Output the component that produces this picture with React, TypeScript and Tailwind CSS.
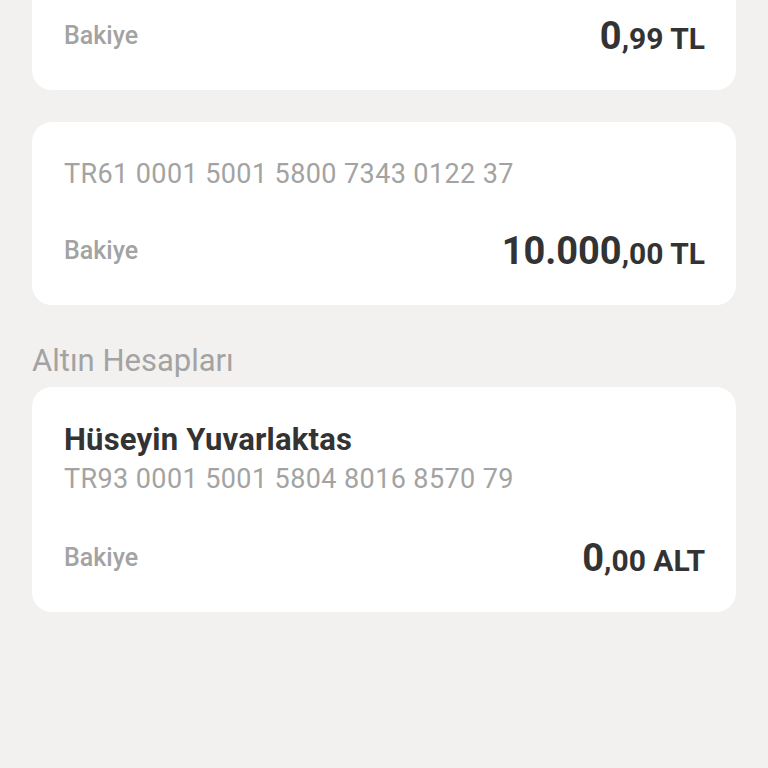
import React from "react";

function AmountRow({ big, small, unit, rowMt }: { big: string; small: string; unit: string; rowMt: string }) {
  return (
    <div className={`flex items-center justify-between ${rowMt}`}>
      <span className="text-[25px] leading-[30px] font-medium text-[#a3a3a3]">Bakiye</span>
      <span className="text-[38px] leading-[44px] font-bold text-[#333333]">
        {big}
        <span className="text-[30px] leading-none">
          ,{small} {unit}
        </span>
      </span>
    </div>
  );
}

export default function App() {
  return (
    <div
      className="min-h-screen w-full bg-[#f2f1ef] px-8"
      style={{ fontFamily: "Roboto, 'Noto Sans', Arial, sans-serif" }}
    >
      {/* Card 1 (partially visible, top cut off) */}
      <div className="rounded-b-[20px] bg-white pl-8 pr-[31px] pt-[14px] pb-[32px]">
        <AmountRow big="0" small="99" unit="TL" rowMt="" />
      </div>

      {/* Card 2 */}
      <div className="mt-8 rounded-[20px] bg-white pl-8 pr-[31px] pt-[37px] pb-[32px]">
        <div className="text-[27px] leading-[30px] tracking-[0.4px] text-[#a3a3a3]">TR61 0001 5001 5800 7343 0122 37</div>
        <AmountRow big="10.000" small="00" unit="TL" rowMt="mt-10" />
      </div>

      {/* Section header */}
      <div className="mt-[38px] mb-2 text-[31px] leading-[36px] text-[#a3a3a3]">Altın Hesapları</div>

      {/* Card 3 */}
      <div className="rounded-[20px] bg-white pl-8 pr-[31px] pt-[35px] pb-[32px]">
        <div className="text-[31px] leading-[36px] font-bold tracking-[0.2px] text-[#333333]">Hüseyin Yuvarlaktas</div>
        <div className="mt-[6px] text-[27px] leading-[30px] tracking-[0.4px] text-[#a3a3a3]">TR93 0001 5001 5804 8016 8570 79</div>
        <AmountRow big="0" small="00" unit="ALT" rowMt="mt-[42px]" />
      </div>
    </div>
  );
}
